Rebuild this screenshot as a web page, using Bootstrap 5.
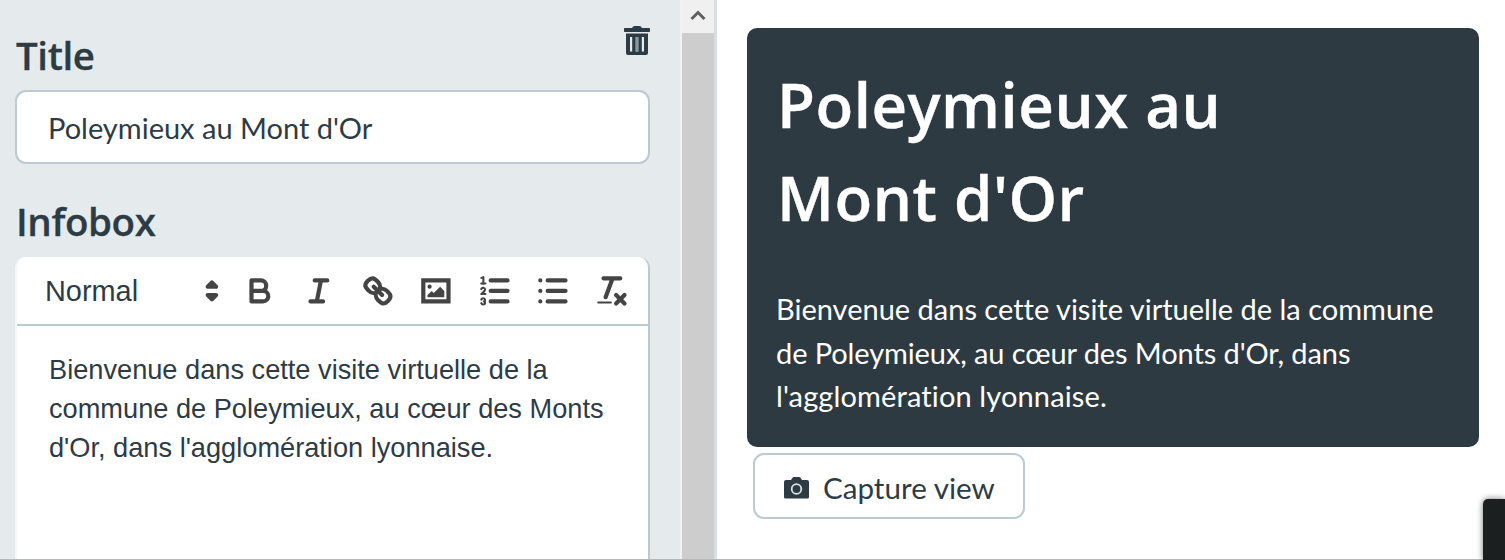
<!DOCTYPE html>
<html lang="en">
<head>
<meta charset="utf-8">
<meta name="viewport" content="width=device-width, initial-scale=1">
<title>Scene editor</title>
<link href="https://cdn.jsdelivr.net/npm/bootstrap@5.3.0/dist/css/bootstrap.min.css" rel="stylesheet">
<style>
  :root { --ink: #2d3b44; --line: #bccad4; --panel: #e5ebed; }
  body { height: 560px; color: var(--ink); font-family: Lato, sans-serif; font-size: 29px; background: #fff; font-variant-ligatures: none; }
  .app { height: 560px; border-bottom: 1px solid #b5b9bb; }
  .editor { width: 680px; padding: 0 30px 0 15px; background: var(--panel); }
  .section-label { font: 600 38.5px/54px "Open Sans", sans-serif; letter-spacing: -.4px; margin: 0 0 0 1px; -webkit-text-stroke: .3px var(--ink); }
  .title-row { padding-top: 28px; height: 90px; }
  .trash { width: 26px; height: 30px; margin-top: -2px; }
  .title-input { height: 74px; border: 2px solid var(--line); border-radius: 11px; padding: 0 31px; font-size: 29px; color: var(--ink); }
  .infobox-label { margin-top: 30px; margin-bottom: 9px; }
  .rich { border: 2px solid var(--line); border-top: 0; border-left-color: #f5f8f9; border-bottom: 0; border-radius: 11px 11px 0 0; background: #fff; }
  .tools { height: 69px; border-bottom: 2px solid var(--line); padding-left: 28px; font: 28.9px "Liberation Sans", sans-serif; }
  .format { width: 185.5px; }
  .format span { padding-top: 2px; }
  .tool { width: 58.6px; border: 0; background: none; padding: 0; display: flex; justify-content: center; }
  .tool:nth-child(2) { margin-left: .6px; }
  .q { width: 37.8px; height: 37.8px; margin-top: 1px; fill: none; stroke: #444; stroke-width: 2; stroke-linecap: round; stroke-linejoin: round; }
  .q .f { fill: #444; stroke: none; }
  .q .ef { fill: #444; stroke: none; fill-rule: evenodd; }
  .q .solid { fill: #444; }
  .q .square { stroke-linejoin: miter; }
  .q .thin { stroke-width: 1; }
  .rich-text { height: 240px; padding: 24px 32px; font: 27.2px/39px "Liberation Sans", sans-serif; white-space: nowrap; }
  .scroll-track { width: 37px; background: #cdcdcd; border-left: 2px solid #f0f3f4; border-right: 3px solid #d8dfe1; }
  .scroll-up { height: 33px; padding-bottom: 4px; background: #f0f0f0; }
  .preview { padding: 28px 26px 0 30px; }
  .info-card { height: 419px; border-radius: 10px; background: #2e3a42; color: #fff; padding: 30px 30px 0; white-space: nowrap; }
  .info-card h1 { font: 600 61.8px/93px "Open Sans", sans-serif; letter-spacing: .5px; -webkit-text-stroke: .4px #fff; margin: 0 0 43px; }
  .info-card p { font-size: 29px; line-height: 43.5px; margin: 0 0 0 -1px; }
  .tight { letter-spacing: -.1px; }
  .loose { letter-spacing: .13px; }
  .capture { width: 272px; height: 66px; margin: 6px 0 0 6px; border: 2px solid var(--line); border-radius: 11px; font-size: 29.6px; color: var(--ink); padding: 4px 0 0 29px; }
  .capture svg { margin-right: 14px; }
  .corner-panel { right: 0; bottom: 0; width: 22px; height: 61px; background: #1b1f20; border-radius: 5px 0 0 0; box-shadow: 0 0 6px rgba(0,0,0,.55); }
</style>
</head>
<body class="overflow-hidden position-relative">
<div class="app d-flex overflow-hidden">
  <section class="editor flex-shrink-0">
    <div class="title-row d-flex justify-content-between align-items-start">
      <h2 class="section-label">Title</h2>
      <svg class="trash" viewBox="0 0 26 30" fill="#2d3b44"><path d="M0 2.500Q0 2 .7 2H8l1-1.200Q9.300 0 10.500 0h5q1.200 0 1.500.8L18 2h7.300q.7 0 .7.500V5.300q0 .7-.7.700H.7Q0 6 0 5.300z"/><path fill-rule="evenodd" d="M2 7.500h22V27q0 2-2 2H4q-2 0-2-2zM6 11v14.500h2.200V11zm5.700 0v14.500h2.600V11zm6.100 0v14.500H20V11z"/><path fill="#8c979d" d="M11.700 11h2.600v14.500h-2.600z"/></svg>
    </div>
    <input class="title-input form-control" type="text" value="Poleymieux au Mont d'Or" aria-label="Title">
    <h2 class="section-label infobox-label">Infobox</h2>
    <div class="rich">
      <div class="tools d-flex align-items-center">
        <div class="format d-flex align-items-center justify-content-between flex-shrink-0">
          <span>Normal</span>
          <svg class="q" viewBox="0 0 18 18"><path class="solid" d="M7 11 9 13 11 11zM7 7 9 5 11 7z"/></svg>
        </div>
        <button class="tool flex-shrink-0" aria-label="Bold"><svg class="q" viewBox="0 0 18 18"><path d="M5,4H9.500A2.500,2.500,0,0,1,12,6.500A2.500,2.500,0,0,1,9.500,9H5zM5,9h5.500A2.500,2.500,0,0,1,13,11.500A2.500,2.500,0,0,1,10.500,14H5z"/></svg></button>
        <button class="tool flex-shrink-0" aria-label="Italic"><svg class="q" viewBox="0 0 18 18"><path d="M7 4h6M5 14h6M8 14 10 4"/></svg></button>
        <button class="tool flex-shrink-0" aria-label="Link"><svg class="q" viewBox="0 0 18 18"><path d="M7 7l4 4M8.900,4.577a3.476,3.476,0,0,1,.36,4.679A3.476,3.476,0,0,1,4.577,8.900C3.185,7.500,2.035,6.400,4.217,4.217S7.500,3.185,8.900,4.577ZM13.423,9.100a3.476,3.476,0,0,0-4.679-.36,3.476,3.476,0,0,0,.36,4.679c1.392,1.392,2.500,2.542,4.679.36S14.815,10.500,13.423,9.100Z"/></svg></button>
        <button class="tool flex-shrink-0" aria-label="Image"><svg class="q" viewBox="0 0 18 18"><path class="square" d="M3 4h12v10H3z"/><circle class="f" cx="6" cy="7" r="1"/><path class="ef" d="M5 12V11L7 9 8 10 11 7 13 9V12z"/></svg></button>
        <button class="tool flex-shrink-0" aria-label="Numbered list"><svg class="q" viewBox="0 0 18 18"><path d="M7 4h8M7 9h8M7 14h8"/><path class="thin" d="M2.500 5.500h2M4.500,10.500h-2c0-.234,1.850-1.076,1.850-2.234A0.959,0.959,0,0,0,2.500,8.156M2.500,14.846a0.959,0.959,0,0,0,1.850-.109A0.700,0.700,0,0,0,3.750,14a0.688,0.688,0,0,0,.6-0.736,0.959,0.959,0,0,0-1.850-.109"/><path class="f" d="M3.500,6A0.500,0.500,0,0,1,3,5.500V3.085l-0.276.138A0.500,0.500,0,0,1,2.053,3c-0.124-.247-0.023-0.324.224-0.447l1-.5A0.500,0.500,0,0,1,4,2.500v3A0.500,0.500,0,0,1,3.500,6Z"/></svg></button>
        <button class="tool flex-shrink-0" aria-label="Bulleted list"><svg class="q" viewBox="0 0 18 18"><path d="M6.500 4H15M6.500 9H15M6.500 14H15M3 4h0M3 9h0M3 14h0"/></svg></button>
        <button class="tool flex-shrink-0" aria-label="Clear formatting"><svg class="q" viewBox="0 0 18 18"><path d="M5 3h8M6 12 9.350 3M11 11l4 4M15 11l-4 4"/><rect class="f" x="2" y="14" width="7" height="1" rx=".5"/></svg></button>
      </div>
      <div class="rich-text">Bienvenue dans cette visite virtuelle de la<br>commune de Poleymieux, au cœur des Monts<br>d'Or, dans l'agglomération lyonnaise.</div>
    </div>
  </section>
  <div class="scroll-track flex-shrink-0">
    <div class="scroll-up d-flex justify-content-center align-items-center"><svg width="16" height="12" viewBox="0 0 16 12" fill="none" stroke="#606060" stroke-width="3"><path d="M1.500 10 8 3.500 14.500 10"/></svg></div>
  </div>
  <main class="preview flex-grow-1">
    <article class="info-card">
      <h1>Poleymieux au<br>Mont d'Or</h1>
      <p>Bienvenue dans cette visite virtuelle de la commune<br><span class="tight">de Poleymieux, au cœur des Monts d'Or, dans</span><br><span class="loose">l'agglomération lyonnaise.</span></p>
    </article>
    <button class="capture btn d-flex align-items-center"><svg width="25" height="22" viewBox="0 0 25 22"><path fill="#2d3b44" d="M2 3h5l1.500-2.200Q9 0 10 0h5q1 0 1.500.8L18 3h5q2 0 2 2v15q0 1.500-1.500 1.500h-22Q0 21.500 0 20V5q0-2 2-2z"/><circle cx="12.500" cy="12" r="4.800" fill="none" stroke="#dce1e4" stroke-width="1.800"/></svg>Capture view</button>
  </main>
</div>
<div class="corner-panel position-absolute"></div>
</body>
</html>
